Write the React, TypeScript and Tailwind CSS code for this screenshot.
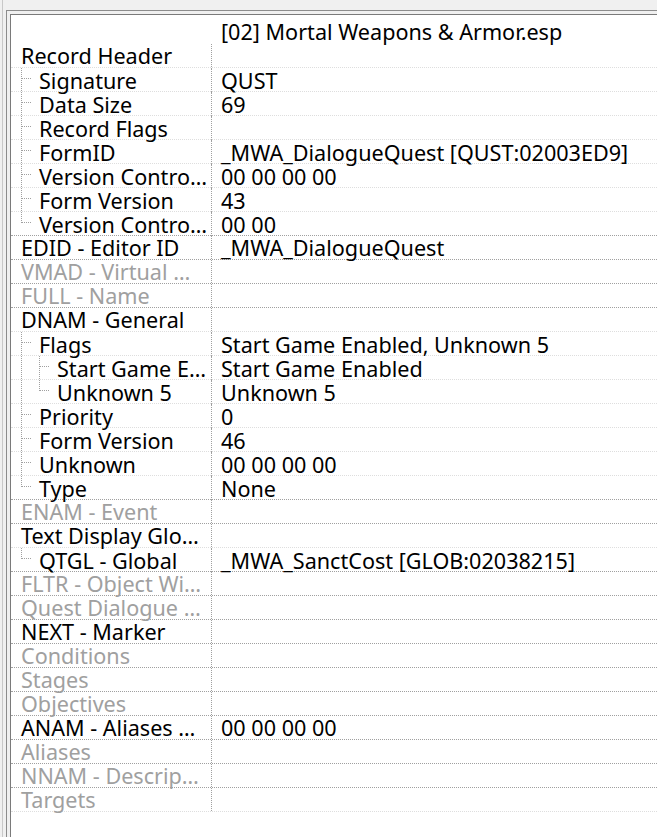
type Row = {
  label: string;
  value?: string;
  tree?: string; // "│" pass-through, " " blank, "├" tee, "└" last child
  off?: boolean;
};

const rows: Row[] = [
  { label: "Record Header" },
  { label: "Signature", value: "QUST", tree: "├" },
  { label: "Data Size", value: "69", tree: "├" },
  { label: "Record Flags", tree: "├" },
  { label: "FormID", value: "_MWA_DialogueQuest [QUST:02003ED9]", tree: "├" },
  { label: "Version Contro…", value: "00 00 00 00", tree: "├" },
  { label: "Form Version", value: "43", tree: "├" },
  { label: "Version Contro…", value: "00 00", tree: "└" },
  { label: "EDID - Editor ID", value: "_MWA_DialogueQuest" },
  { label: "VMAD - Virtual …", off: true },
  { label: "FULL - Name", off: true },
  { label: "DNAM - General" },
  { label: "Flags", value: "Start Game Enabled, Unknown 5", tree: "├" },
  { label: "Start Game E…", value: "Start Game Enabled", tree: "│├" },
  { label: "Unknown 5", value: "Unknown 5", tree: "│└" },
  { label: "Priority", value: "0", tree: "├" },
  { label: "Form Version", value: "46", tree: "├" },
  { label: "Unknown", value: "00 00 00 00", tree: "├" },
  { label: "Type", value: "None", tree: "└" },
  { label: "ENAM - Event", off: true },
  { label: "Text Display Glo…" },
  { label: "QTGL - Global", value: "_MWA_SanctCost [GLOB:02038215]", tree: "└" },
  { label: "FLTR - Object Wi…", off: true },
  { label: "Quest Dialogue …", off: true },
  { label: "NEXT - Marker" },
  { label: "Conditions", off: true },
  { label: "Stages", off: true },
  { label: "Objectives", off: true },
  { label: "ANAM - Aliases …", value: "00 00 00 00" },
  { label: "Aliases", off: true },
  { label: "NNAM - Descrip…", off: true },
  { label: "Targets", off: true },
];

function Guide({ kind }: { kind: string }) {
  const dot = { stroke: "#a0a0a0", strokeDasharray: "1 1", shapeRendering: "crispEdges" as const };
  return (
    <svg width="18" height="24" className="shrink-0 self-start overflow-visible">
      {kind === "│" || kind === "├" ? <line x1="0.5" y1="0" x2="0.5" y2="24" {...dot} /> : null}
      {kind === "└" ? <line x1="0.5" y1="0" x2="0.5" y2="11" {...dot} /> : null}
      {kind === "├" || kind === "└" ? <line x1="1" y1="10.5" x2="10" y2="10.5" {...dot} /> : null}
    </svg>
  );
}

function TreeRow({ row, next }: { row: Row; next?: Row }) {
  const nextTop = next !== undefined && !next.tree;
  return (
    <div
      className={`grid grid-cols-[201px_1fr] h-6 border-b border-dotted ${
        nextTop ? "border-[#a0a0a0]" : "border-[#dedede]"
      }`}
    >
      <div className="flex items-center pl-[10px] border-r border-dotted border-[#a0a0a0]">
        {row.tree?.split("").map((k, i) => <Guide key={i} kind={k} />)}
        <span className={`whitespace-nowrap leading-[23px] ${row.off ? "text-[#a0a0a0]" : "text-black"}`}>
          {row.label}
        </span>
      </div>
      <div className="flex items-center pl-[9px] whitespace-nowrap leading-[23px] text-black">{row.value}</div>
    </div>
  );
}

export default function App() {
  return (
    <div
      className="flex w-[657px] h-[837px] bg-[#f0f0f0] overflow-hidden text-[21.6px] leading-6"
      style={{ fontFamily: '"Noto Sans", "Open Sans", sans-serif' }}
    >
      {/* neighbouring pane edge */}
      <div className="w-[3px] h-full border-r border-[#c8c8c8]" />
      <div className="flex-1 pt-[10px] pl-[3px]">
        <div className="h-full border-l border-t border-[#8c8c8c] pl-[3px] pt-[3px]">
          <div className="h-full border-l border-t border-[#7a7a7a] bg-white">
            {/* file header */}
            <div className="grid grid-cols-[201px_1fr] h-[29px] items-end">
              <div />
              <div className="pl-[9px] h-6 flex items-center whitespace-nowrap text-black">
                [02] Mortal Weapons &amp; Armor.esp
              </div>
            </div>
            {rows.map((r, i) => (
              <TreeRow key={i} row={r} next={rows[i + 1]} />
            ))}
          </div>
        </div>
      </div>
    </div>
  );
}
